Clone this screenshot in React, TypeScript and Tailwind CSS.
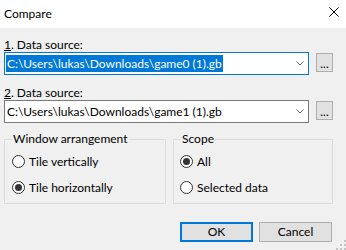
import React from 'react'

function Chevron() {
  return (
    <svg width="8" height="5" viewBox="0 0 8 5" className="mr-[4px] shrink-0">
      <path d="M0.5 0.5 L4 4 L7.5 0.5" fill="none" stroke="#606060" strokeWidth="1" />
    </svg>
  )
}

function ComboRow({ path, selected }: { path: string; selected?: boolean }) {
  return (
    <div className="flex items-start gap-[7px]">
      <div
        className={
          selected
            ? 'flex h-[23px] w-[305px] items-center justify-between border border-[#0078d7] bg-white'
            : 'flex h-[23px] w-[305px] items-center justify-between border border-[#7a7a7a] bg-white'
        }
      >
        {selected ? (
          <span className="ml-[1px] bg-[#0078d7] px-[1px] leading-[17px] text-white">{path}</span>
        ) : (
          <span className="ml-[2px] leading-[17px]">{path}</span>
        )}
        <Chevron />
      </div>
      <button
        type="button"
        className="mt-[1px] flex h-[19px] w-[17px] items-end justify-center border border-[#adadad] bg-[#e1e1e1] pb-[2px] leading-[10px]"
      >
        ...
      </button>
    </div>
  )
}

function Radio({ label, checked }: { label: string; checked?: boolean }) {
  return (
    <div className="flex h-[13px] items-center gap-[4px]">
      <span className="flex h-[13px] w-[13px] shrink-0 items-center justify-center rounded-full border border-[#333333] bg-white">
        {checked && <span className="h-[7px] w-[7px] rounded-full bg-[#333333]" />}
      </span>
      <span className="leading-[13px]">{label}</span>
    </div>
  )
}

export default function App() {
  return (
    <div className="relative h-[250px] w-[346px] overflow-hidden bg-[#f0f0f0] font-['Lato','Liberation_Sans',sans-serif] text-[12px] text-black">
      <div className="flex h-[28px] items-start justify-between bg-white pl-[4px] pr-[7px]">
        <span className="mt-[6px] leading-[16px]">Compare</span>
        <svg width="10" height="10" viewBox="0 0 10 10" className="mt-[7px]">
          <path d="M0.5 0.5 L9.5 9.5 M9.5 0.5 L0.5 9.5" stroke="#000" strokeWidth="1" />
        </svg>
      </div>

      <div className="pl-[4px] pr-[13px]">
        <div className="mt-[10px] h-[14px] leading-[14px]">
          <span className="underline">1</span>. Data source:
        </div>
        <ComboRow path="C:\Users\lukas\Downloads\game0 (1).gb" selected />

        <div className="mt-[11px] h-[14px] leading-[14px]">
          <span className="underline">2</span>. Data source:
        </div>
        <ComboRow path="C:\Users\lukas\Downloads\game1 (1).gb" />

        <div className="mt-[9px] flex gap-[7px]">
          <fieldset className="w-[162px] border border-[#dcdcdc] pb-[9px] pl-[7px]">
            <legend className="h-[14px] px-[1px] leading-[14px]">Window arrangement</legend>
            <div className="mt-[9px] flex flex-col gap-[13px]">
              <Radio label="Tile vertically" />
              <Radio label="Tile horizontally" checked />
            </div>
          </fieldset>
          <fieldset className="w-[160px] border border-[#dcdcdc] pb-[9px] pl-[6px]">
            <legend className="ml-[1px] h-[14px] px-[1px] leading-[14px]">Scope</legend>
            <div className="mt-[9px] flex flex-col gap-[13px]">
              <Radio label="All" checked />
              <Radio label="Selected data" />
            </div>
          </fieldset>
        </div>

        <div className="mt-[18px] flex justify-end gap-[6px] pr-[1px]">
          <button type="button" className="h-[20px] w-[73px] border-2 border-[#0078d7] bg-[#e1e1e1] leading-[14px]">
            OK
          </button>
          <button type="button" className="h-[20px] w-[73px] border border-[#adadad] bg-[#e1e1e1] leading-[16px]">
            Cancel
          </button>
        </div>
      </div>

      <svg width="11" height="11" viewBox="0 0 11 11" className="absolute bottom-0 right-0">
        <rect x="9" y="1" width="2" height="2" fill="#c4c4c4" />
        <rect x="9" y="5" width="2" height="2" fill="#c4c4c4" />
        <rect x="5" y="5" width="2" height="2" fill="#c4c4c4" />
        <rect x="9" y="9" width="2" height="2" fill="#c4c4c4" />
        <rect x="5" y="9" width="2" height="2" fill="#c4c4c4" />
        <rect x="1" y="9" width="2" height="2" fill="#c4c4c4" />
      </svg>
    </div>
  )
}
